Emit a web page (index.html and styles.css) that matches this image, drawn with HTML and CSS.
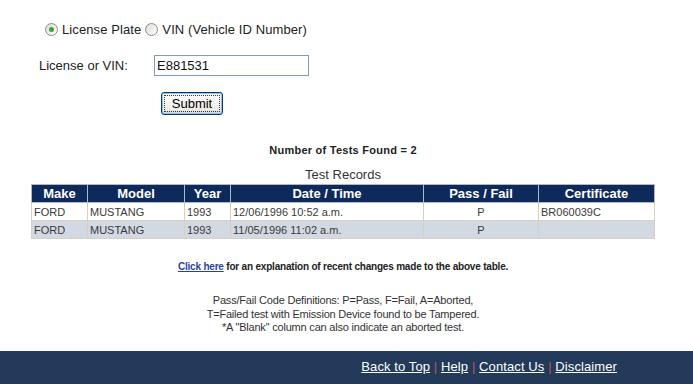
FILE: index.html
```html
<!DOCTYPE html>
<html lang="en">
<head>
    <meta charset="UTF-8">
    <title>Emissions Test Records</title>
    <link rel="stylesheet" href="styles.css">
</head>
<body>
    <div class="page">
        <form class="search">
            <div class="choice">
                <span class="radio checked"></span><span class="opt">License Plate</span>
                <span class="radio"></span><span class="opt">VIN (Vehicle ID Number)</span>
            </div>
            <div class="field">
                <label for="plate">License or VIN:</label>
                <input type="text" id="plate" value="E881531">
            </div>
            <div class="actions">
                <button type="button" class="btn"><span>Submit</span></button>
            </div>
        </form>

        <p class="count">Number of Tests Found = 2</p>

        <table class="records">
            <caption>Test Records</caption>
            <thead>
                <tr>
                    <th class="c-make">Make</th>
                    <th class="c-model">Model</th>
                    <th class="c-year">Year</th>
                    <th class="c-date">Date / Time</th>
                    <th class="c-pass">Pass / Fail</th>
                    <th class="c-cert">Certificate</th>
                </tr>
            </thead>
            <tbody>
                <tr>
                    <td>FORD</td>
                    <td>MUSTANG</td>
                    <td>1993</td>
                    <td>12/06/1996 10:52 a.m.</td>
                    <td class="mid">P</td>
                    <td>BR060039C</td>
                </tr>
                <tr class="alt">
                    <td>FORD</td>
                    <td>MUSTANG</td>
                    <td>1993</td>
                    <td>11/05/1996 11:02 a.m.</td>
                    <td class="mid">P</td>
                    <td></td>
                </tr>
            </tbody>
        </table>

        <p class="note"><a href="#">Click here</a> for an explanation of recent changes made to the above table.</p>

        <p class="defs">
            Pass/Fail Code Definitions: P=Pass, F=Fail, A=Aborted,<br>
            T=Failed test with Emission Device found to be Tampered.<br>
            *A "Blank" column can also indicate an aborted test.
        </p>
    </div>

    <footer class="footer">
        <a href="#">Back to Top</a> <span class="sep">|</span>
        <a href="#">Help</a> <span class="sep">|</span>
        <a href="#">Contact Us</a> <span class="sep">|</span>
        <a href="#">Disclaimer</a>
    </footer>
</body>
</html>
```

FILE: styles.css
```css
body {
    margin: 0;
    font-family: "Liberation Sans", Arial, sans-serif;
    color: #222;
    background: #fff;
    height: 384px;
    overflow: hidden;
}

.page {
    width: 686px;
    padding-top: 20px;
    height: 331px;
}

/* search form */
.search {
    font-size: 13px;
}

.choice {
    display: flex;
    align-items: center;
    padding-left: 45px;
    height: 18px;
}

.radio {
    width: 11px;
    height: 11px;
    border: 1px solid #8c8c8c;
    border-radius: 50%;
    background: linear-gradient(135deg, #dcdcd6, #fff);
    position: relative;
    margin-right: 4px;
}

.radio.checked::after {
    content: "";
    position: absolute;
    left: 3px;
    top: 3px;
    width: 5px;
    height: 5px;
    border-radius: 50%;
    background: #3aa33a;
}

.opt {
    margin-right: 4px;
    letter-spacing: 0.1px;
}

.field {
    display: flex;
    align-items: center;
    margin-top: 17px;
    padding-left: 39px;
}

.field label {
    width: 115px;
}

.field input {
    width: 149px;
    height: 17px;
    padding: 1px 2px;
    border: 1px solid #7f9db9;
    font: 13px "Liberation Sans", Arial, sans-serif;
    color: #111;
    margin: 0;
}

.actions {
    padding-left: 161px;
    margin-top: 16px;
}

.btn {
    width: 62px;
    height: 23px;
    border: 1px solid #003c74;
    border-radius: 3px;
    background: linear-gradient(#fff, #ecebe6 80%, #d6d0c5);
    box-shadow: inset 0 0 0 1px #9fbbe8;
    padding: 2px;
    font: 13px "Liberation Sans", Arial, sans-serif;
    color: #000;
}

.btn span {
    display: block;
    border: 1px dotted #333;
    line-height: 15px;
}

/* results */
.count {
    margin: 29px 0 0;
    text-align: center;
    font-size: 11px;
    font-weight: bold;
    letter-spacing: 0.25px;
    color: #222;
}

.records {
    margin: 11px auto 0;
    width: 624px;
    table-layout: fixed;
    border-collapse: collapse;
    border: 1px solid #b8b8b8;
    font-size: 11px;
}

.records caption {
    font-size: 13px;
    color: #333;
    padding-bottom: 2px;
}

.records th {
    background: #0e2a5c;
    color: #fff;
    font-size: 13px;
    font-weight: bold;
    height: 17px;
    padding: 0;
    border: 1px solid #b0b8c8;
    border-top: 0;
}

.records td {
    height: 17px;
    padding: 0 2px;
    color: #3a3a3a;
    border: 1px solid #d4d0c4;
}

.records tr.alt td {
    background: #d3d9e2;
}

.records td.mid {
    text-align: center;
}

.c-make { width: 55px; }
.c-model { width: 96px; }
.c-year { width: 45px; }
.c-date { width: 192px; }
.c-pass { width: 114px; }

.note {
    margin: 22px 0 0;
    text-align: center;
    font-size: 10px;
    font-weight: bold;
    letter-spacing: -0.2px;
    color: #222;
}

.note a {
    color: #2b3fa3;
}

.defs {
    margin: 22px 0 0;
    text-align: center;
    font-size: 11px;
    line-height: 13.5px;
    letter-spacing: -0.2px;
    color: #333;
}

/* footer */
.footer {
    height: 33px;
    box-sizing: border-box;
    background: #243a5b;
    text-align: right;
    padding: 8px 76px 0 0;
    font-size: 13px;
    line-height: 16px;
    letter-spacing: 0.1px;
}

.footer a {
    color: #fff;
}

.footer .sep {
    color: #b55a4f;
}
```
